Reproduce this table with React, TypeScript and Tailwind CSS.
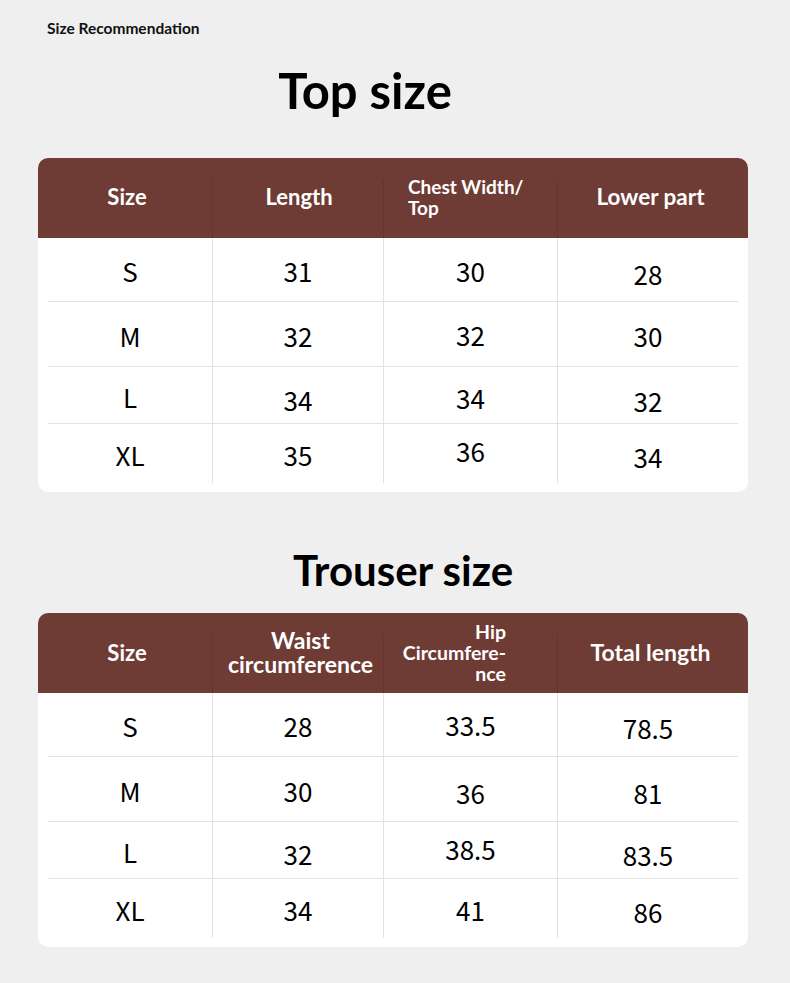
import React from "react";

type Row = { cells: string[]; dy?: number[] };

const COLS = "grid-cols-[164px_171px_174px_181px]";

const topRows: Row[] = [
  { cells: ["S", "31", "30", "28"], dy: [0, 0, 0, 3] },
  { cells: ["M", "32", "32", "30"], dy: [0, 0, -1, 0] },
  { cells: ["L", "34", "34", "32"], dy: [0, 3, 1, 4] },
  { cells: ["XL", "35", "36", "34"], dy: [0, 0, -4, 2] },
];

const trouserRows: Row[] = [
  { cells: ["S", "28", "33.5", "78.5"], dy: [0, 0, -1, 2] },
  { cells: ["M", "30", "36", "81"], dy: [0, 0, 2, 2] },
  { cells: ["L", "32", "38.5", "83.5"], dy: [0, 2, -3, 3] },
  { cells: ["XL", "34", "41", "86"], dy: [0, 0, 0, 2] },
];

const rowHeights = ["h-[64px]", "h-[65px]", "h-[57px]", "h-[59px]"];

function HeaderCell({ children, first, className = "" }: { children: React.ReactNode; first?: boolean; className?: string }) {
  return (
    <div className={`relative flex items-center justify-center text-white ${className}`}>
      {!first && <div className="absolute left-0 top-[22px] bottom-0 w-px bg-[#66342f]" />}
      {children}
    </div>
  );
}

function SizeTable({ header, rows }: { header: React.ReactNode; rows: Row[] }) {
  return (
    <div className="ml-[38px] w-[710px] overflow-hidden rounded-[10px] bg-white">
      <div className="grid h-[80px] grid-cols-[174px_171px_174px_191px] bg-[#6f3b35] font-['Lato',sans-serif] font-bold">
        {header}
      </div>
      <div className="px-[10px] pb-[9px]">
        {rows.map((r, i) => (
          <div
            key={i}
            className={`grid ${COLS} ${rowHeights[i]} ${i < rows.length - 1 ? "border-b border-[#e2e2e2]" : ""}`}
          >
            {r.cells.map((c, j) => (
              <div
                key={j}
                className={`flex items-center justify-center font-['Noto_Sans_CJK_SC','Noto_Sans',sans-serif] text-[26px] text-black ${j > 0 ? "border-l border-[#e2e2e2]" : ""}`}
              >
                <span style={{ transform: `translateY(${(r.dy?.[j] ?? 0) + 1}px)` }}>{c}</span>
              </div>
            ))}
          </div>
        ))}
      </div>
    </div>
  );
}

export default function App() {
  return (
    <div className="min-h-[983px] w-[790px] bg-[#efefef] pb-[35px]">
      <div className="pl-[47px] pt-[18px] font-['Lato',sans-serif] text-[15.5px] font-bold leading-[20px] text-[#111]">
        Size Recommendation
      </div>
      <h1 className="mt-[23px] w-[730px] text-center font-['Lato',sans-serif] text-[49px] font-bold leading-[58px] text-black">
        Top size
      </h1>
      <div className="mt-[39px]">
        <SizeTable
          rows={topRows}
          header={
            <>
              <HeaderCell first className="text-[22px] pb-[3px] pl-[4px]">Size</HeaderCell>
              <HeaderCell className="text-[22px] pb-[3px] pl-[3px]">Length</HeaderCell>
              <HeaderCell className="!justify-start pl-[25px] text-[19px] leading-[21px]">
                <span className="-mt-[2px]">Chest Width/<br />Top</span>
              </HeaderCell>
              <HeaderCell className="text-[22.5px] pb-[3px] pr-[4px]">Lower part</HeaderCell>
            </>
          }
        />
      </div>
      <h2 className="mt-[51px] w-[806px] text-center font-['Lato',sans-serif] text-[42px] font-bold leading-[54px] text-black">
        Trouser size
      </h2>
      <div className="mt-[16px]">
        <SizeTable
          rows={trouserRows}
          header={
            <>
              <HeaderCell first className="text-[22px] pb-[2px] pl-[4px]">Size</HeaderCell>
              <HeaderCell className="text-center text-[23px] leading-[24px] pl-[6px]">
                <span className="-mt-[3px]">Waist<br />circumference</span>
              </HeaderCell>
              <HeaderCell className="!justify-start pl-[15px] text-right text-[19.5px] leading-[21px]">
                <span className="-mt-[1px] w-[108px]">Hip<br />Circumfere-<br />nce</span>
              </HeaderCell>
              <HeaderCell className="text-[23px] pb-[1px] pr-[4px]">Total length</HeaderCell>
            </>
          }
        />
      </div>
    </div>
  );
}
